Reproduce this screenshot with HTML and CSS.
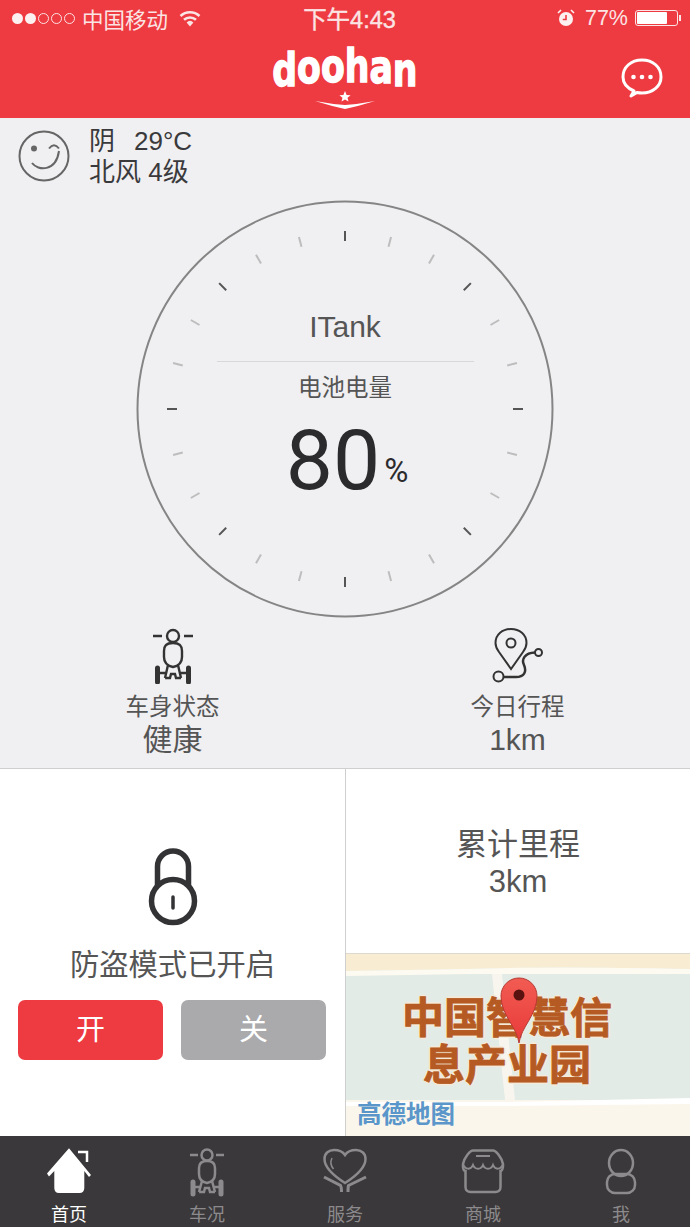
FILE: index.html
```html
<!DOCTYPE html>
<html lang="zh-CN">

<head>
    <meta charset="UTF-8">
    <meta name="viewport" content="width=device-width, initial-scale=1.0">
    <title>doohan</title>
    <link rel="stylesheet" href="styles.css">
</head>

<body>
    <div class="app">
        <div class="status">
            <div class="status__left">
                <div class="signal">
                    <i class="signal__dot"></i><i class="signal__dot"></i><i class="signal__dot signal__dot--off"></i><i class="signal__dot signal__dot--off"></i><i class="signal__dot signal__dot--off"></i>
                </div>
                <span class="status__carrier">中国移动</span>
                <svg class="status__wifi" width="22" height="17" viewBox="0 0 22 17">
                    <path d="M1.5 6 A14 14 0 0 1 20.5 6" fill="none" stroke="#fbe4e4" stroke-width="2.6" />
                    <path d="M5 9.8 A9 9 0 0 1 17 9.8" fill="none" stroke="#fbe4e4" stroke-width="2.6" />
                    <path d="M7.6 12.4 A5 5 0 0 1 14.4 12.4 L11 16.5 Z" fill="#fbe4e4" />
                </svg>
            </div>
            <div class="status__time">下午4:43</div>
            <div class="status__right">
                <svg class="status__alarm" width="20" height="20" viewBox="0 0 20 20">
                    <circle cx="10" cy="11" r="7" fill="#fdf0f0" />
                    <path d="M10 7 V11.5 H6.8" fill="none" stroke="#ef3a42" stroke-width="1.6" />
                    <path d="M2 5 L5 2 M18 5 L15 2" stroke="#fdf0f0" stroke-width="1.6" />
                </svg>
                <span class="status__pct">77%</span>
                <div class="battery">
                    <div class="battery__fill"></div>
                </div>
                <i class="battery__nub"></i>
            </div>
        </div>

        <header class="header">
            <div class="logo">
                <div class="logo__name"><span class="logo__l1">d</span><span class="logo__l2">o</span><span class="logo__l3">o</span><span class="logo__l4">h</span><span class="logo__l5">a</span><span class="logo__l6">n</span></div>
                <svg class="logo__mark" width="60" height="20" viewBox="0 0 60 20">
                    <path d="M30 0 L31.6 4 L35.6 4.2 L32.5 6.8 L33.5 10.6 L30 8.5 L26.5 10.6 L27.5 6.8 L24.4 4.2 L28.4 4 Z" fill="#fff" />
                    <path d="M0 10 Q16 13 30 14 Q44 13 60 10 Q44 15 30 18 Q16 15 0 10 Z" fill="#fff" />
                </svg>
            </div>
            <svg class="header__msg" width="42" height="40" viewBox="0 0 42 40">
                <path d="M13 33 C6 30 2 25 2 19 C2 9 10 2 21 2 C32 2 40 9 40 19 C40 28 32 35 21 35 C19 35 17.500 34.800 16 34.500 L10 38 Z" fill="none" stroke="#fff" stroke-width="3" stroke-linejoin="round" />
                <circle cx="12.500" cy="19" r="2.300" fill="#fff" />
                <circle cx="21" cy="19" r="2.300" fill="#fff" />
                <circle cx="29.500" cy="19" r="2.300" fill="#fff" />
            </svg>
        </header>

        <main class="main">
            <div class="weather">
                <svg class="weather__icon" width="52" height="52" viewBox="0 0 52 52">
                    <circle cx="26" cy="26" r="24.500" fill="none" stroke="#666" stroke-width="2" />
                    <circle cx="16" cy="18.500" r="3" fill="#666" />
                    <path d="M31 18.500 Q36 12 41 18.500" fill="none" stroke="#666" stroke-width="2" />
                    <path d="M14 33 C20 41 38 42 41 21" fill="none" stroke="#666" stroke-width="2" />
                </svg>
                <div class="weather__text">
                    <div class="weather__row"><span class="weather__sky">阴</span>29°C</div>
                    <div class="weather__row">北风 4级</div>
                </div>
            </div>

            <div class="dial">
                <svg class="dial__face" width="418" height="418" viewBox="-209 -209 418 418">
                    <circle r="207.500" fill="none" stroke="#858585" stroke-width="2" />
                    <g class="tick tick--major">
                        <line y1="-178" y2="-168" />
                        <line y1="-178" y2="-168" transform="rotate(45)" />
                        <line y1="-178" y2="-168" transform="rotate(90)" />
                        <line y1="-178" y2="-168" transform="rotate(135)" />
                        <line y1="-178" y2="-168" transform="rotate(180)" />
                        <line y1="-178" y2="-168" transform="rotate(225)" />
                        <line y1="-178" y2="-168" transform="rotate(270)" />
                        <line y1="-178" y2="-168" transform="rotate(315)" />
                    </g>
                    <g class="tick">
                        <line y1="-178" y2="-168" transform="rotate(15)" />
                        <line y1="-178" y2="-168" transform="rotate(30)" />
                        <line y1="-178" y2="-168" transform="rotate(60)" />
                        <line y1="-178" y2="-168" transform="rotate(75)" />
                        <line y1="-178" y2="-168" transform="rotate(105)" />
                        <line y1="-178" y2="-168" transform="rotate(120)" />
                        <line y1="-178" y2="-168" transform="rotate(150)" />
                        <line y1="-178" y2="-168" transform="rotate(165)" />
                        <line y1="-178" y2="-168" transform="rotate(195)" />
                        <line y1="-178" y2="-168" transform="rotate(210)" />
                        <line y1="-178" y2="-168" transform="rotate(240)" />
                        <line y1="-178" y2="-168" transform="rotate(255)" />
                        <line y1="-178" y2="-168" transform="rotate(285)" />
                        <line y1="-178" y2="-168" transform="rotate(300)" />
                        <line y1="-178" y2="-168" transform="rotate(330)" />
                        <line y1="-178" y2="-168" transform="rotate(345)" />
                    </g>
                </svg>
                <div class="dial__content">
                    <div class="dial__name">ITank</div>
                    <div class="dial__line"></div>
                    <div class="dial__label">电池电量</div>
                    <div class="dial__value">80<span class="dial__unit">%</span></div>
                </div>
            </div>

            <div class="stats">
                <div class="stat">
                    <svg class="stat__icon" width="42" height="56" viewBox="0 0 42 56">
                        <g fill="none" stroke="#333" stroke-width="2.400">
                            <circle cx="21" cy="8" r="6" />
                            <path d="M1 8 H10 M32 8 H41" />
                            <path d="M21 15 C14 15 12 18 12 23 V29 C12 35 16 38 21 39 C26 38 30 35 30 29 V23 C30 18 28 15 21 15 Z" />
                            <path d="M16 37 L13 50 M26 37 L29 50 M6 45 H14 M28 45 H36 M13 50 H18 L19 46 H23 L24 50 H29" />
                        </g>
                        <path d="M5.500 40 V54 M36.500 40 V54" fill="none" stroke="#333" stroke-width="5" stroke-linecap="round" />
                    </svg>
                    <div class="stat__label">车身状态</div>
                    <div class="stat__value">健康</div>
                </div>
                <div class="stat">
                    <svg class="stat__icon" width="52" height="56" viewBox="0 0 52 56">
                        <g fill="none" stroke="#333" stroke-width="2">
                            <path d="M19 41 L7 24 C4 20 3.500 17.500 3.500 15 C3.500 6.500 10.500 1 19 1 C27.500 1 34.500 6.500 34.500 15 C34.500 17.500 34 20 31 24 Z" />
                            <circle cx="19" cy="15" r="4.500" />
                            <circle cx="6.500" cy="48.500" r="5" />
                            <circle cx="46.500" cy="24.500" r="3.500" />
                            <path d="M11.500 49 H24 C32 49 35 44 32 37 C29 31 33 25 43 24.500" stroke-width="2.500" />
                        </g>
                    </svg>
                    <div class="stat__label">今日行程</div>
                    <div class="stat__value stat__value--num">1km</div>
                </div>
            </div>
        </main>

        <section class="panels">
            <div class="guard">
                <svg class="guard__lock" width="50" height="78" viewBox="0 0 50 78">
                    <g fill="none" stroke="#333336" stroke-width="5.500">
                        <path d="M9.500 38 V18.500 A15.500 15.500 0 0 1 40.500 18.500 V38" />
                        <circle cx="25" cy="53" r="21.500" />
                    </g>
                    <path d="M25 49 V60" stroke="#333336" stroke-width="3.500" stroke-linecap="round" />
                </svg>
                <div class="guard__text">防盗模式已开启</div>
                <div class="guard__btns">
                    <div class="btn btn--on">开</div>
                    <div class="btn btn--off">关</div>
                </div>
            </div>
            <div class="side">
                <div class="total">
                    <div class="total__label">累计里程</div>
                    <div class="total__value">3km</div>
                </div>
                <div class="map">
                    <svg class="map__bg" width="344" height="183" viewBox="0 0 344 183">
                        <rect width="344" height="183" fill="#e2ebe5" />
                        <path d="M0 0 H344 V15 Q200 12 120 15 L0 17 Z" fill="#f8ecd2" />
                        <path d="M0 17 L120 15 Q200 12 344 15 V20 H124 L0 22 Z" fill="#fdfaf2" />
                        <path d="M146 20 H156 L169 146 H159 Z" fill="#f7f5ee" />
                        <path d="M0 146 H344 V183 H0 Z" fill="#fbf6ec" />
                        <path d="M0 148 H160 L344 144 V150 L160 152 H0 Z" fill="#fff" />
                    </svg>
                    <div class="map__place">
                        <div>中国智慧信</div>
                        <div>息产业园</div>
                    </div>
                    <svg class="map__pin" width="38" height="68" viewBox="0 0 38 68">
                        <defs>
                            <linearGradient id="pinfill" x1="0" y1="0" x2="0" y2="1">
                                <stop offset="0" stop-color="#f25c52" />
                                <stop offset="1" stop-color="#e83a3a" />
                            </linearGradient>
                        </defs>
                        <path d="M19 66 C17 50 1 38 1 19 C1 9 9 1 19 1 C29 1 37 9 37 19 C37 38 21 50 19 66 Z" fill="url(#pinfill)" stroke="#b83a33" stroke-width="1" />
                        <circle cx="19" cy="18" r="5.500" fill="#5a1210" />
                    </svg>
                    <div class="map__brand">高德地图</div>
                </div>
            </div>
        </section>

        <nav class="tabs">
            <div class="tab tab--active">
                <svg class="tab__icon" width="50" height="50" viewBox="0 0 50 50">
                    <path d="M25 1.300 L47 28 L45 30 L40.300 24 V41 C40.300 44 38.500 46 35.500 46 H15 C12 46 10.300 44 10.300 41 V24 L5 29.500 L3 26.500 Z" fill="#fff" />
                    <path d="M34 5 H43 V15" fill="none" stroke="#fff" stroke-width="2.500" />
                </svg>
                <div class="tab__label">首页</div>
            </div>
            <div class="tab">
                <svg class="tab__icon" width="50" height="50" viewBox="0 0 50 50">
                    <g fill="none" stroke="#8c8a8c" stroke-width="2.500">
                        <circle cx="25" cy="8" r="5.500" />
                        <path d="M8 8 H16 M34 8 H42" />
                        <path d="M25 14 C18 14 17 18 17 21 V27 C17 32 20 35 25 36 C30 35 33 32 33 27 V21 C33 18 32 14 25 14 Z" />
                        <path d="M20 34 L17 45 M30 34 L33 45 M11 40 H18 M32 40 H39 M17 45 H22 L23 41 H27 L28 45 H33" />
                    </g>
                    <path d="M11 35 V47 M39 35 V47" fill="none" stroke="#8c8a8c" stroke-width="5" stroke-linecap="round" />
                </svg>
                <div class="tab__label">车况</div>
            </div>
            <div class="tab">
                <svg class="tab__icon" width="50" height="50" viewBox="0 0 50 50">
                    <g fill="none" stroke="#8c8a8c" stroke-width="2.500">
                        <path d="M25 36 C14 29 4.500 21 4.500 12 C4.500 6 9 3 14 3 C19 3 23 5 25 8 C27 5 31 3 36 3 C41 3 45.500 6 45.500 12 C45.500 21 36 29 25 36 Z" />
                        <path d="M12 11 C10 15 11 19 13.500 22" stroke-width="1.500" />
                        <path d="M4 30 L20.500 38.500 Q21.500 40 21.500 45 M46 30 L28.500 38.500 Q28 40 28 45" stroke-width="3" />
                    </g>
                </svg>
                <div class="tab__label">服务</div>
            </div>
            <div class="tab">
                <svg class="tab__icon" width="50" height="50" viewBox="0 0 50 50">
                    <g fill="none" stroke="#8c8a8c" stroke-width="2.500">
                        <path d="M15 3.500 H35 C38 3.500 44 11 45 17 C45.500 22 43.500 24 42.500 24 V40 C42.500 43 40.500 45 37.500 45 H12.500 C9.500 45 7.500 43 7.500 40 V24 C6 24 4.500 22 5 17 C6 11 12 3.500 15 3.500 Z" />
                        <path d="M5 17 C7 23 13 23 15 18 C17 23 23 23 25 18 C27 23 33 23 35 18 C37 23 43 23 45 17" stroke-width="2" />
                        <path d="M18 9 H32" stroke-width="2" />
                    </g>
                </svg>
                <div class="tab__label">商城</div>
            </div>
            <div class="tab">
                <svg class="tab__icon" width="50" height="50" viewBox="0 0 50 50">
                    <g fill="none" stroke="#8c8a8c" stroke-width="2.500">
                        <ellipse cx="25" cy="16" rx="12" ry="13" />
                        <rect x="11" y="27" width="28" height="19" rx="8" />
                    </g>
                </svg>
                <div class="tab__label">我</div>
            </div>
        </nav>
    </div>
</body>

</html>
```

FILE: styles.css
```css
* {
    padding: 0;
    margin: 0;
    box-sizing: border-box;
}

body {
    font-family: 'Liberation Sans', 'Noto Sans CJK SC', sans-serif;
    color: #333;
    background: #f0eff2;
}

.app {
    width: 690px;
    height: 1227px;
    overflow: hidden;
    display: flex;
    flex-direction: column;
}

/* status bar */
.status {
    height: 40px;
    background: #ee3a41;
    color: #fbe4e4;
    display: grid;
    grid-template-columns: 1fr auto 1fr;
    align-items: center;
    padding: 0 9px 4px 12px;
}

.status__left {
    display: flex;
    align-items: center;
}

.signal {
    display: flex;
    gap: 2px;
}

.signal__dot {
    display: block;
    width: 11px;
    height: 11px;
    border-radius: 50%;
    background: #fdf0f0;
}

.signal__dot--off {
    background: none;
    border: 1px solid #fbe4e4;
}

.status__carrier {
    font-size: 21.5px;
    margin-left: 7px;
}

.status__wifi {
    margin-left: 11px;
}

.status__time {
    font-size: 23.5px;
    margin-left: 6px;
    -webkit-text-stroke: .4px #fbe4e4;
}

.status__right {
    display: flex;
    align-items: center;
    justify-content: flex-end;
}

.status__alarm {
    margin-right: 9px;
}

.status__pct {
    font-size: 21.5px;
    margin-right: 7px;
}

.battery {
    width: 43px;
    height: 16px;
    border: 1px solid #fbe4e4;
    border-radius: 3px;
    padding: 1px;
}

.battery__fill {
    width: 77%;
    height: 100%;
    background: #fff;
    border-radius: 1px;
}

.battery__nub {
    display: block;
    width: 2px;
    height: 6px;
    background: #fbe4e4;
    margin-left: 1px;
}

/* header */
.header {
    height: 78px;
    background: #ee3a41;
    position: relative;
    display: flex;
    justify-content: center;
    align-items: flex-start;
}

.logo {
    display: flex;
    flex-direction: column;
    align-items: center;
}

.logo__name {
    display: flex;
    align-items: flex-end;
    height: 50px;
    margin-top: 1px;
    font-family: 'DejaVu Sans Condensed', 'DejaVu Sans', sans-serif;
    font-weight: 700;
    font-size: 36px;
    line-height: 1;
    color: #fff;
    -webkit-text-stroke: 1px #fff;
    transform: scale(1.07, 1.3);
    transform-origin: center bottom;
}

.logo__l1,
.logo__l6 {
    transform: translateY(2px);
}

.logo__l3,
.logo__l4 {
    transform: translateY(-1px);
}

.logo__mark {
    display: block;
}

.header__msg {
    position: absolute;
    top: 18px;
    right: 27px;
}

/* main block */
.main {
    height: 650px;
    background: #f0eff2;
}

.weather {
    display: flex;
    padding: 8px 0 0 18px;
    height: 70px;
}

.weather__icon {
    margin-top: 4px;
}

.weather__text {
    margin-left: 19px;
    font-size: 26px;
    line-height: 31px;
    color: #3a3a3c;
}

.weather__sky {
    margin-right: 19px;
}

.dial {
    width: 418px;
    height: 418px;
    margin: 12px auto 0;
    display: grid;
}

.dial__face,
.dial__content {
    grid-area: 1 / 1;
}

.tick line {
    stroke: #bdbdbd;
    stroke-width: 2;
}

.tick--major line {
    stroke: #555;
}

.dial__content {
    display: flex;
    flex-direction: column;
    align-items: center;
    padding-top: 107px;
}

.dial__name {
    font-size: 30px;
    line-height: 40px;
    color: #555;
}

.dial__line {
    width: 257px;
    height: 1px;
    background: #d8d8d8;
    margin-top: 14px;
}

.dial__label {
    font-size: 23.5px;
    line-height: 30px;
    margin-top: 11px;
    color: #555;
}

.dial__value {
    font-family: Roboto, 'Liberation Sans', sans-serif;
    font-weight: 400;
    font-size: 84px;
    line-height: 90px;
    margin-top: 13px;
    margin-left: 4px;
    color: #2b2b2d;
}

.dial__unit {
    font-size: 33px;
    margin-left: 4px;
    vertical-align: 7px;
}

.stats {
    display: grid;
    grid-template-columns: 345px 345px;
    padding-top: 10px;
}

.stat {
    display: flex;
    flex-direction: column;
    align-items: center;
}

.stat__icon {
    margin-bottom: 8px;
}

.stat__label {
    font-size: 23.5px;
    line-height: 30px;
    color: #555;
}

.stat__value {
    font-size: 30px;
    line-height: 36px;
    color: #555;
}

.stat__value--num {
    font-size: 30px;
}

/* lower panels */
.panels {
    height: 368px;
    border-top: 1px solid #cfcfcf;
    background: #fff;
    display: grid;
    grid-template-columns: 345px 345px;
}

.guard {
    display: flex;
    flex-direction: column;
    align-items: center;
    padding-top: 79px;
}

.guard__text {
    font-size: 29.3px;
    line-height: 40px;
    margin-top: 19px;
    color: #555;
}

.guard__btns {
    display: grid;
    grid-template-columns: 145px 145px;
    gap: 18px;
    margin: 15px 1px 0 0;
}

.btn {
    height: 60px;
    border-radius: 7px;
    color: #fff;
    font-size: 29px;
    line-height: 60px;
    text-align: center;
}

.btn--on {
    background: #ee3a41;
}

.btn--off {
    background: #aaa9ac;
}

.side {
    border-left: 1px solid #cfcfcf;
    display: flex;
    flex-direction: column;
}

.total {
    height: 184px;
    padding-top: 3px;
    display: flex;
    flex-direction: column;
    align-items: center;
    justify-content: center;
    color: #555;
    font-size: 31px;
    line-height: 37px;
}

.total__label {
    font-size: 31px;
}

.map {
    position: relative;
    height: 183px;
    border-top: 1px solid #ddd8d0;
    overflow: hidden;
}

.map__bg {
    display: block;
}

.map__place {
    position: absolute;
    top: 41px;
    left: -6px;
    width: 334px;
    text-align: center;
    color: #b55a22;
    font-size: 42px;
    font-weight: 700;
    line-height: 47px;
    -webkit-text-stroke: .8px #b55a22;
    text-shadow: 2px 0 #f6e9d8, -2px 0 #f6e9d8, 0 2px #f6e9d8, 0 -2px #f6e9d8;
}

.map__pin {
    position: absolute;
    top: 23px;
    left: 154px;
}

.map__brand {
    position: absolute;
    top: 146px;
    left: 11px;
    font-size: 24.5px;
    line-height: 30px;
    font-weight: 700;
    color: #5a96ca;
}

/* tab bar */
.tabs {
    height: 91px;
    background: #3a383a;
    display: grid;
    grid-template-columns: repeat(5, 1fr);
}

.tab {
    display: flex;
    flex-direction: column;
    align-items: center;
    padding-top: 11px;
    color: #8c8a8c;
}

.tab--active {
    color: #fff;
}

.tab__icon {
    display: block;
}

.tab__label {
    font-size: 18px;
    line-height: 26px;
    margin-top: 5px;
}
```
